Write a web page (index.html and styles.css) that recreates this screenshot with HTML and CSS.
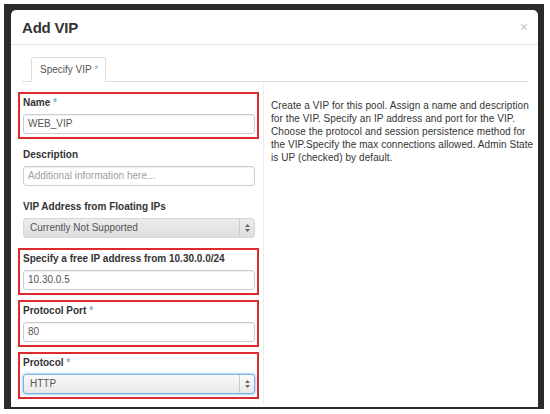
FILE: index.html
```html
<!DOCTYPE html>
<html>
<head>
<meta charset="utf-8">
<link rel="stylesheet" href="styles.css">
</head>
<body>
<div class="frame">
  <div class="modal">
    <div class="modal-header">
      <h3 class="title">Add VIP</h3>
      <span class="close">×</span>
    </div>
    <div class="modal-body">
      <div class="tabs">
        <div class="tab">Specify VIP <span class="req">*</span></div>
      </div>
      <div class="content">
        <div class="form-col">
          <div class="group hl">
            <div class="label">Name <span class="req">*</span></div>
            <div class="input">WEB_VIP</div>
          </div>
          <div class="group">
            <div class="label">Description</div>
            <div class="input placeholder">Additional information here...</div>
          </div>
          <div class="group">
            <div class="label">VIP Address from Floating IPs</div>
            <div class="select disabled"><span class="val">Currently Not Supported</span><span class="arrows"><svg width="7" height="10" viewBox="0 0 7 10"><path d="M3.5 1 L6 4 L1 4 Z M3.5 9 L6 6 L1 6 Z" fill="#666"/></svg></span></div>
          </div>
          <div class="group hl">
            <div class="label">Specify a free IP address from 10.30.0.0/24</div>
            <div class="input">10.30.0.5</div>
          </div>
          <div class="group hl">
            <div class="label">Protocol Port <span class="req">*</span></div>
            <div class="input">80</div>
          </div>
          <div class="group hl">
            <div class="label">Protocol <span class="req">*</span></div>
            <div class="select focus"><span class="val">HTTP</span><span class="arrows"><svg width="7" height="10" viewBox="0 0 7 10"><path d="M3.5 1 L6 4 L1 4 Z M3.5 9 L6 6 L1 6 Z" fill="#666"/></svg></span></div>
          </div>
        </div>
        <div class="help-col">
          <p class="help">Create a VIP for this pool. Assign a name and description<br>for the VIP. Specify an IP address and port for the VIP.<br>Choose the protocol and session persistence method for<br>the VIP.Specify the max connections allowed. Admin State<br>is UP (checked) by default.</p>
        </div>
      </div>
    </div>
  </div>
</div>
</body>
</html>
```
FILE: styles.css
```css
body {
  margin: 0;
  background: #fff;
  font-family: "Liberation Sans", Arial, Helvetica, sans-serif;
  color: #333;
}
.frame {
  margin: 4px 0 0 4px;
  width: 540px;
  height: 405px;
  box-sizing: border-box;
  background: #2b2b2b;
  padding: 6px 6px 0 7px;
}
.modal {
  background: #fff;
  height: 397px;
  border-radius: 5px 5px 0 0;
  overflow: hidden;
}
.modal-header {
  height: 34px;
  border-bottom: 1px solid #e5e5e5;
  display: flex;
  align-items: center;
  justify-content: space-between;
  padding: 0 10px 0 11px;
}
.title {
  margin: 0;
  font-size: 15px;
  font-weight: bold;
  color: #333;
  letter-spacing: -0.2px;
}
.close {
  color: #c4c4c4;
  font-size: 14px;
  line-height: 14px;
}
.modal-body {
  padding: 12px 10px 0 11px;
}
.tabs {
  display: flex;
  border-bottom: 1px solid #ddd;
  padding-left: 9px;
}
.tab {
  height: 23px;
  line-height: 23px;
  padding: 0 7px 1px 8px;
  border: 1px solid #ddd;
  border-bottom: none;
  border-radius: 3px 3px 0 0;
  background: #fff;
  margin-bottom: -1px;
  font-size: 10px;
  color: #555;
}
.req {
  color: #7fb0d2;
}
.content {
  display: flex;
}
.form-col {
  flex: 0 0 241px;
  width: 241px;
  margin-left: -4px;
  padding-top: 10px;
  margin-right: 4px;
}
.group {
  border: 2px solid transparent;
  padding: 2px 2px 3px 3px;
  margin-bottom: 5px;
}
.group.hl {
  border-color: #dc2a2e;
}
.label {
  font-size: 10px;
  font-weight: bold;
  line-height: 14px;
  margin-bottom: 4px;
  color: #333;
}
.input {
  height: 20px;
  box-sizing: border-box;
  border: 1px solid #ccc;
  border-radius: 3px;
  padding: 0 4px;
  font-size: 10px;
  line-height: 18px;
  color: #555;
  box-shadow: inset 0 1px 1px rgba(0,0,0,0.06);
}
.input.placeholder {
  color: #a0a0a0;
}
.select {
  height: 20px;
  box-sizing: border-box;
  border: 1px solid #ccc;
  border-radius: 3px;
  display: flex;
  align-items: stretch;
  font-size: 10px;
  color: #555;
  background: linear-gradient(#fafafa, #e9e9e9);
}
.select.disabled {
  background: linear-gradient(#ececec, #dedede);
  border-color: #d6d6d6;
}
.select.focus {
  border-color: #7fb3de;
  box-shadow: 0 0 2px 1px rgba(102,175,233,0.55);
}
.val {
  flex: 1;
  padding-left: 6px;
  line-height: 18px;
}
.arrows {
  width: 14px;
  border-left: 1px solid #ccc;
  display: flex;
  align-items: center;
  justify-content: center;
}
.help-col {
  flex: 1 1 auto;
  min-width: 0;
  border-left: 1px solid #eee;
  padding-left: 7px;
  padding-top: 17px;
}
.help {
  margin: 0;
  font-size: 10px;
  letter-spacing: 0.08px;
  line-height: 13px;
  color: #333;
  white-space: nowrap;
}
```
